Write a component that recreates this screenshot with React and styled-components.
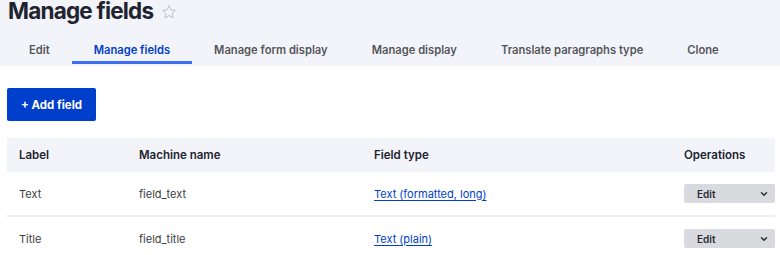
import React from "react";
import styled, { createGlobalStyle } from "styled-components";

const GlobalStyle = createGlobalStyle`
  html, body {
    margin: 0;
    padding: 0;
    background: #fff;
    font-family: Inter, "Noto Sans", sans-serif;
    color: #232429;
  }
`;

const Header = styled.header`
  background: #f3f4f9;
  height: 66px;
  display: flex;
  flex-direction: column;
`;

const TitleRow = styled.div`
  display: flex;
  align-items: center;
  gap: 8px;
  padding-left: 8px;
  height: 26px;
  margin-top: -2px;
`;

const Title = styled.h1`
  margin: 0;
  font-size: 22.5px;
  font-weight: 700;
  letter-spacing: -0.035em;
  line-height: 26px;
  color: #222330;
`;

const Star = styled.svg`
  width: 16px;
  height: 16px;
  margin-top: 1px;
`;

const Tabs = styled.nav`
  display: flex;
  margin-top: 14px;
  padding-left: 7px;
`;

const Tab = styled.a`
  padding: 0 22px;
  height: 26px;
  display: flex;
  align-items: center;
  font-size: 11.2px;
  font-weight: 600;
  color: ${(p) => (p.$active ? "#003ecc" : "#55565b")};
  border-bottom: 3px solid ${(p) => (p.$active ? "#3b6ff0" : "transparent")};
  box-sizing: border-box;
  white-space: nowrap;
`;

const Content = styled.main`
  padding: 22px 5px 0 7px;
`;

const PrimaryButton = styled.button`
  width: 89px;
  height: 33px;
  border: 0;
  border-radius: 2px;
  background: #003ecc;
  color: #fff;
  font-family: inherit;
  font-size: 11.5px;
  font-weight: 700;
  cursor: pointer;
`;

const Table = styled.table`
  margin-top: 17px;
  width: 100%;
  border-collapse: collapse;
  font-size: 11px;
`;

const HeadCell = styled.th`
  background: #f3f4f9;
  height: 34px;
  padding: 0 0 0 ${(p) => (p.$flush ? "0" : "12px")};
  text-align: left;
  font-weight: 600;
  font-size: 11.5px;
  width: ${(p) => p.$w || "auto"};
  color: #222330;
`;

const Row = styled.tr`
  border-bottom: ${(p) => (p.$last ? "0" : "2px solid #eeeff3")};
`;

const Cell = styled.td`
  height: 43px;
  padding: 0 0 0 12px;
  color: #3c3d43;
`;

const TypeLink = styled.a`
  color: #003ecc;
  text-decoration: underline;
  text-underline-offset: 2px;
`;

const Dropdown = styled.div`
  width: 91px;
  height: 19px;
  background: #d9dae0;
  border-radius: 2px;
  display: flex;
  align-items: center;
  justify-content: space-between;
  padding: 0 6px 0 13px;
  box-sizing: border-box;
  font-size: 10px;
  font-weight: 600;
  color: #2b2c31;
`;

const OpCell = styled(Cell)`
  padding-left: 0;
  width: 91px;
`;

const fields = [
  { label: "Text", machine: "field_text", type: "Text (formatted, long)" },
  { label: "Title", machine: "field_title", type: "Text (plain)" },
];

const tabs = [
  "Edit",
  "Manage fields",
  "Manage form display",
  "Manage display",
  "Translate paragraphs type",
  "Clone",
];

export default function App() {
  return (
    <>
      <GlobalStyle />
      <Header>
        <TitleRow>
          <Title>Manage fields</Title>
          <Star viewBox="0 0 24 24" fill="none" stroke="#b8b9c0" strokeWidth="1.3">
            <path d="M12 2.5l2.9 6.3 6.8.7-5.1 4.6 1.5 6.8L12 17.4l-6.1 3.5 1.5-6.8-5.1-4.6 6.8-.7z" />
          </Star>
        </TitleRow>
        <Tabs>
          {tabs.map((t) => (
            <Tab key={t} $active={t === "Manage fields"}>
              {t}
            </Tab>
          ))}
        </Tabs>
      </Header>
      <Content>
        <PrimaryButton>+ Add field</PrimaryButton>
        <Table>
          <thead>
            <tr>
              <HeadCell $w="108px">Label</HeadCell>
              <HeadCell $w="223px">Machine name</HeadCell>
              <HeadCell>Field type</HeadCell>
              <HeadCell $w="91px" $flush>Operations</HeadCell>
            </tr>
          </thead>
          <tbody>
            {fields.map((f, i) => (
              <Row key={f.machine} $last={i === fields.length - 1}>
                <Cell>{f.label}</Cell>
                <Cell>{f.machine}</Cell>
                <Cell>
                  <TypeLink href="#">{f.type}</TypeLink>
                </Cell>
                <OpCell>
                  <Dropdown>
                    Edit
                    <svg width="10" height="10" viewBox="0 0 24 24" fill="none" stroke="#2b2c31" strokeWidth="3.5" strokeLinecap="round" strokeLinejoin="round">
                      <path d="M6 9l6 6 6-6" />
                    </svg>
                  </Dropdown>
                </OpCell>
              </Row>
            ))}
          </tbody>
        </Table>
      </Content>
    </>
  );
}
